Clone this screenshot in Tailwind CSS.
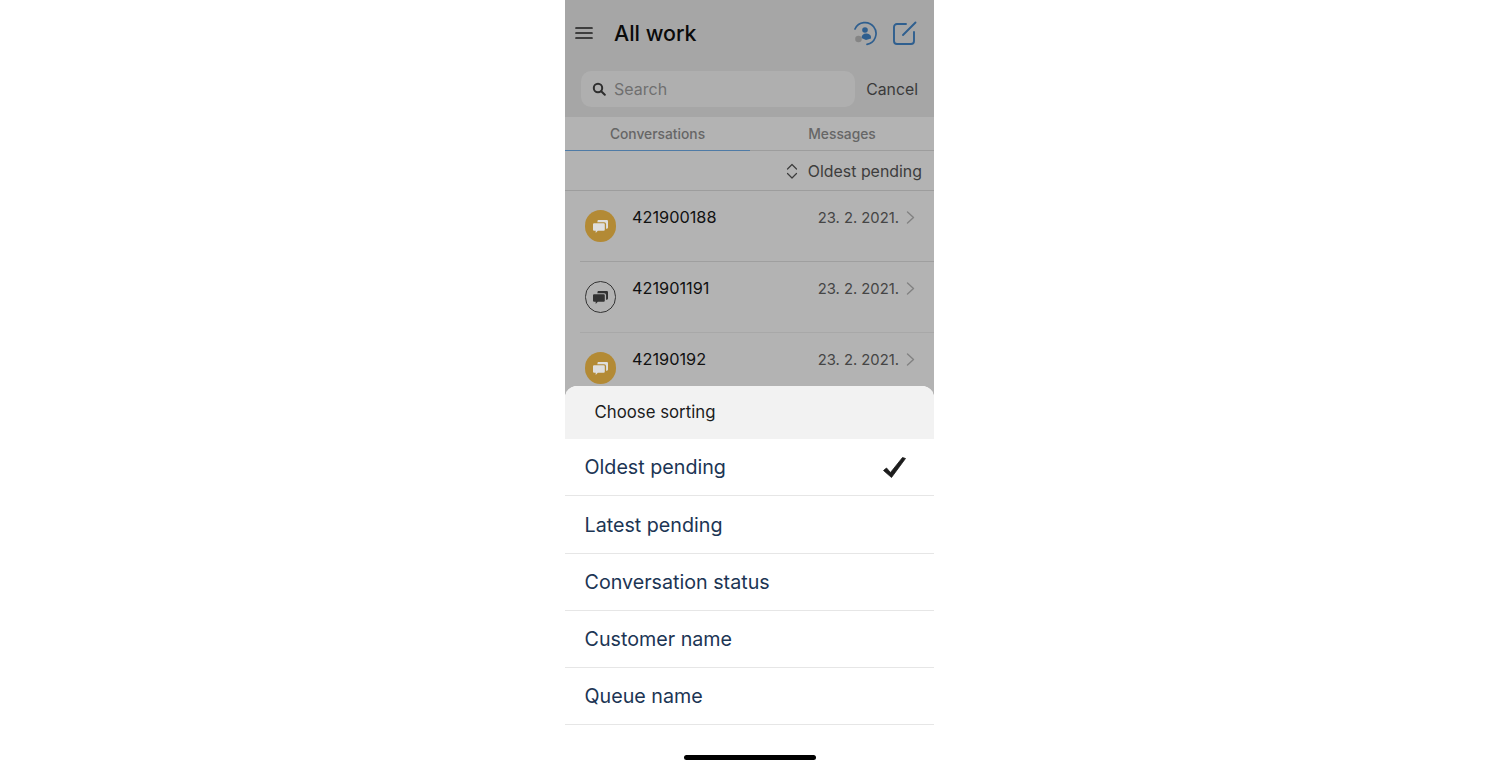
<!DOCTYPE html>
<html>
<head>
<meta charset="utf-8">
<script src="https://cdn.jsdelivr.net/npm/@tailwindcss/browser@4"></script>
</head>
<body class="bg-white font-['Inter',sans-serif]">
<div class="w-[1500px] h-[768px] flex overflow-hidden bg-white pl-[565px]">
  <div class="w-[369px] h-[768px] flex flex-col">
    <div class="h-[386px] overflow-hidden bg-[#b3b3b3]">
      <div class="bg-[#a6a6a6] h-[117px] flex flex-col">
        <div class="h-[66px] flex items-center pl-[10px] pr-[17px]">
          <svg class="w-[18px] h-[14px]" viewBox="0 0 18 14" fill="none" stroke="#1c1c1c" stroke-width="1.7" stroke-linecap="round"><path d="M1 2h16M1 7h16M1 12h16"/></svg>
          <span class="ml-[21px] mt-[1px] text-[21.400px] font-medium leading-none text-[#0a0a0a]">All work</span>
          <svg class="ml-auto w-[26px] h-[26px]" viewBox="0 0 26 26" fill="none">
            <path d="M3 9A11 11 0 1 1 15 24.400" stroke="#2f5f8f" stroke-width="1.700" stroke-linecap="round"/>
            <circle cx="13" cy="10" r="2.800" fill="#2f5f8f"/>
            <path d="M9.500 18c0-3 2-4.500 4.500-4.500s5 1.500 5 3.500v1.500l-5 1.500z" fill="#2f5f8f"/>
            <circle cx="6.500" cy="19" r="3.300" fill="#858585"/>
          </svg>
          <svg class="ml-[15px] w-[24px] h-[24px]" viewBox="0 0 24 24" fill="none" stroke="#2f5f8f" stroke-width="1.900" stroke-linecap="round" stroke-linejoin="round"><path d="M13 3H4a3 3 0 0 0-3 3v14a3 3 0 0 0 3 3h14a3 3 0 0 0 3-3v-9"/><path d="M10 14 22.500 1.500"/></svg>
        </div>
        <div class="flex items-center pl-[16px] pr-[16px] mt-[5px]">
          <div class="w-[274px] h-[36px] rounded-[10px] bg-[#afafaf] flex items-center pl-[11px]">
            <svg class="w-[14px] h-[14px]" viewBox="0 0 14 14" fill="none" stroke="#2e2e2e" stroke-width="2" stroke-linecap="round"><circle cx="6" cy="6" r="4.200"/><path d="m9.200 9.200 3.600 3.600"/></svg>
            <span class="ml-[8px] text-[16px] text-[#6f6f6f]">Search</span>
          </div>
          <span class="ml-auto pt-[1px] text-[15.800px] text-[#3a3a3a]">Cancel</span>
        </div>
      </div>
      <div class="h-[34px] flex text-[13.800px] font-medium text-[#666666] border-b border-[#9d9d9d]">
        <div class="w-[185px] flex items-center justify-center pt-[1px] border-b border-[#4f7ba6] -mb-px">Conversations</div>
        <div class="flex-1 flex items-center justify-center pt-[1px]">Messages</div>
      </div>
      <div class="h-[40px] flex items-center justify-end pr-[12px] border-b border-[#9d9d9d]">
        <svg class="w-[12px] h-[16px]" viewBox="0 0 12 16" fill="none" stroke="#3c3c3c" stroke-width="1.200" stroke-linecap="round" stroke-linejoin="round"><path d="m1.500 6 4.500-4.500L10.500 6M1.500 10.500 6 15l4.500-4.500"/></svg>
        <span class="ml-[10px] pt-[2px] text-[15.900px] text-[#3d3d3d]">Oldest pending</span>
      </div>

      <div class="ml-[15px] h-[71px] flex border-b border-[#9f9f9f] pr-[19px]">
        <div class="mt-[19px] ml-[5px] w-[31px] h-[32px] rounded-full bg-[#b38a35] flex items-center justify-center">
          <svg class="w-[15px] h-[13px]" viewBox="0 0 14 12" fill="#dedede"><path d="M4.500 0H13a1 1 0 0 1 1 1v6a1 1 0 0 1-1 1h-.8V3.800a1.800 1.800 0 0 0-1.800-1.800H4z"/><path d="M1 3h9a1 1 0 0 1 1 1v5a1 1 0 0 1-1 1H4.500L2.500 12v-2H1a1 1 0 0 1-1-1V4a1 1 0 0 1 1-1z"/></svg>
        </div>
        <span class="ml-[16px] mt-[16px] text-[16.300px] leading-[20px] text-[#111111]">421900188</span>
        <span class="ml-auto mt-[17px] text-[14.800px] leading-[20px] text-[#454545]">23. 2. 2021.</span>
        <svg class="ml-[7px] mt-[20px] w-[9px] h-[13px]" viewBox="0 0 9 13" fill="none" stroke="#828282" stroke-width="1.400" stroke-linecap="round" stroke-linejoin="round"><path d="m1.500 1 6 5.500-6 5.500"/></svg>
      </div>
      <div class="ml-[15px] h-[71px] flex border-b border-[#a8a8a8] pr-[19px]">
        <div class="mt-[19px] ml-[5px] w-[31px] h-[32px] rounded-full border border-[#333333] flex items-center justify-center">
          <svg class="w-[15px] h-[13px]" viewBox="0 0 14 12" fill="#333333"><path d="M4.500 0H13a1 1 0 0 1 1 1v6a1 1 0 0 1-1 1h-.8V3.800a1.800 1.800 0 0 0-1.800-1.800H4z"/><path d="M1 3h9a1 1 0 0 1 1 1v5a1 1 0 0 1-1 1H4.500L2.500 12v-2H1a1 1 0 0 1-1-1V4a1 1 0 0 1 1-1z"/></svg>
        </div>
        <span class="ml-[16px] mt-[16px] text-[16.300px] leading-[20px] text-[#111111]">421901191</span>
        <span class="ml-auto mt-[17px] text-[14.800px] leading-[20px] text-[#454545]">23. 2. 2021.</span>
        <svg class="ml-[7px] mt-[20px] w-[9px] h-[13px]" viewBox="0 0 9 13" fill="none" stroke="#828282" stroke-width="1.400" stroke-linecap="round" stroke-linejoin="round"><path d="m1.500 1 6 5.500-6 5.500"/></svg>
      </div>
      <div class="ml-[15px] h-[71px] flex pr-[19px]">
        <div class="mt-[19px] ml-[5px] w-[31px] h-[32px] rounded-full bg-[#b38a35] flex items-center justify-center">
          <svg class="w-[15px] h-[13px]" viewBox="0 0 14 12" fill="#dedede"><path d="M4.500 0H13a1 1 0 0 1 1 1v6a1 1 0 0 1-1 1h-.8V3.800a1.800 1.800 0 0 0-1.800-1.800H4z"/><path d="M1 3h9a1 1 0 0 1 1 1v5a1 1 0 0 1-1 1H4.500L2.500 12v-2H1a1 1 0 0 1-1-1V4a1 1 0 0 1 1-1z"/></svg>
        </div>
        <span class="ml-[16px] mt-[16px] text-[16.300px] leading-[20px] text-[#111111]">42190192</span>
        <span class="ml-auto mt-[17px] text-[14.800px] leading-[20px] text-[#454545]">23. 2. 2021.</span>
        <svg class="ml-[7px] mt-[20px] w-[9px] h-[13px]" viewBox="0 0 9 13" fill="none" stroke="#828282" stroke-width="1.400" stroke-linecap="round" stroke-linejoin="round"><path d="m1.500 1 6 5.500-6 5.500"/></svg>
      </div>
    </div>

    <div class="flex-1 bg-[#b3b3b3]">
      <div class="h-full bg-white rounded-t-[12px] flex flex-col overflow-hidden">
        <div class="h-[53px] bg-[#f2f2f2] flex items-center pl-[29.500px] pt-[1px] text-[16.800px] text-[#1c1c1c]">Choose sorting</div>
        <div class="h-[57px] flex pl-[19.500px] pr-[27px] border-b border-[#e6e6e6] text-[19.700px] text-[#1c3554]">
          <span class="mt-[16px] leading-[24px]">Oldest pending</span>
          <svg class="ml-auto mt-[16px] w-[25px] h-[24px]" viewBox="0 0 25 24" fill="#1c1c1c"><path d="M1.500 15.500 4.500 13 8.500 17.500 20.500 2.500 23.500 3.500 9.500 22.500z" stroke="#1c1c1c" stroke-width="0.800" stroke-linejoin="round"/></svg>
        </div>
        <div class="h-[58px] flex items-center pl-[19.500px] pt-[2px] border-b border-[#e6e6e6] text-[19.700px] text-[#1c3554]">Latest pending</div>
        <div class="h-[57px] flex items-center pl-[19.500px] pt-[1px] border-b border-[#e6e6e6] text-[19.700px] text-[#1c3554]">Conversation status</div>
        <div class="h-[57px] flex items-center pl-[19.500px] pt-[1px] border-b border-[#e6e6e6] text-[19.700px] text-[#1c3554]">Customer name</div>
        <div class="h-[57px] flex items-center pl-[19.500px] pt-[1px] border-b border-[#e6e6e6] text-[19.700px] text-[#1c3554]">Queue name</div>
        <div class="flex-1 flex justify-center pt-[30px]">
          <div class="w-[132px] h-[5px] rounded-full bg-black"></div>
        </div>
      </div>
    </div>
  </div>
</div>
</body>
</html>
